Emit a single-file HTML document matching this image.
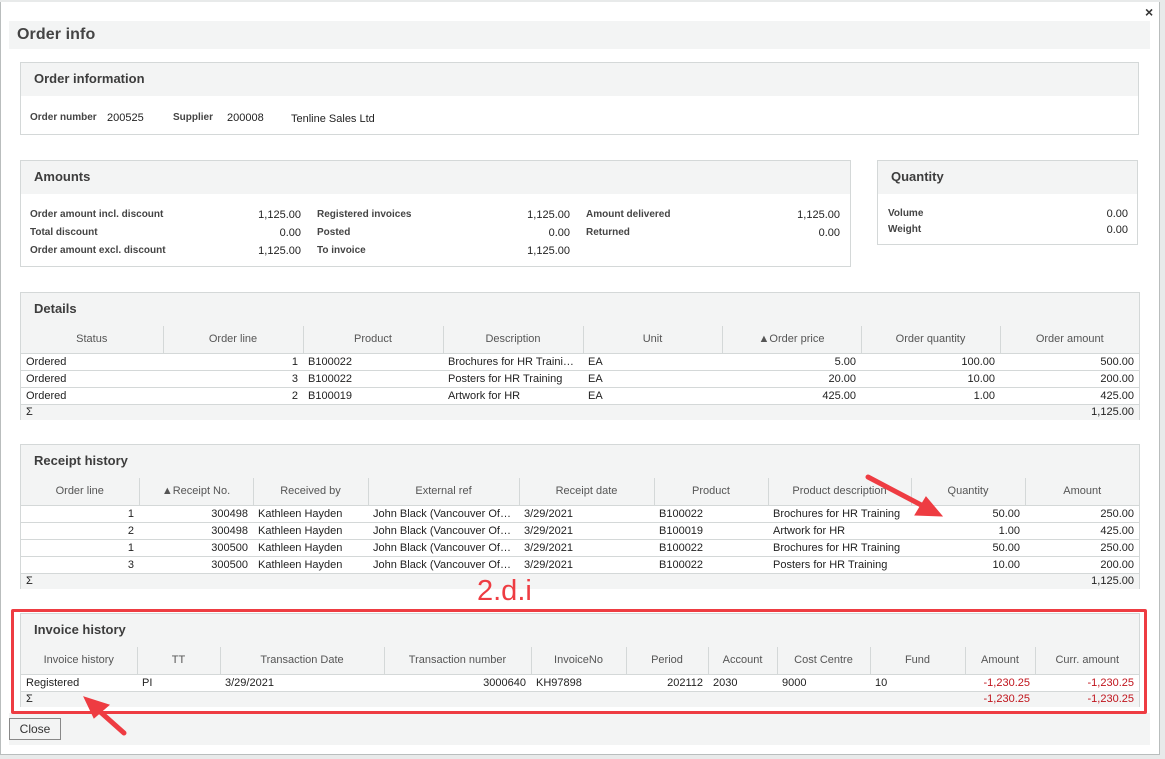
<!DOCTYPE html>
<html><head><meta charset="utf-8"><style>
*{margin:0;padding:0;box-sizing:border-box}
body{width:1165px;height:759px;background:#e8eaea;font-family:"Liberation Sans",sans-serif;color:#222;position:relative;overflow:hidden}
.dlg{position:absolute;left:0;top:2px;width:1160px;height:753px;background:#fff;border:1px solid #b9bdbd;border-top:none}
.abs{position:absolute}
.title{left:9px;top:21px;width:1141px;height:28px;background:#f3f4f4;font-size:16px;font-weight:bold;color:#444;padding:5px 8px;letter-spacing:0.1px}
.panel{position:absolute;border:1px solid #d4d8d8;background:#fff}
.ph{height:33px;background:#f3f4f4;font-size:13px;font-weight:bold;color:#3d3d3d;padding:8px 13px}
.lbl{font-size:10px;font-weight:bold;color:#444;position:absolute}
.val{font-size:11px;color:#222;position:absolute}
table{border-collapse:collapse;table-layout:fixed;width:100%;font-size:11px}
th{height:27px;background:#f3f4f4;font-weight:normal;color:#555;border:1px solid #d4d8d8;border-top:none;text-align:center;font-size:11px}
th:first-child{border-left:none}th:last-child{border-right:none}
td{height:17px;border-bottom:1px solid #d4d8d8;padding:0 5px;white-space:nowrap;overflow:hidden;text-overflow:ellipsis;color:#222}
tr.sum td{background:#f3f4f4;height:16px;border-bottom:none}
.r{text-align:right}.red{color:#c0141c}
</style></head><body>
<div class="dlg"></div>
<div class="abs" style="left:1145px;top:4px;font-size:14px;font-weight:bold;color:#333">×</div>
<div class="abs title">Order info</div>

<div class="panel" style="left:20px;top:62px;width:1119px;height:73px">
<div class="ph">Order information</div>
<span class="lbl" style="left:9px;top:49px">Order number</span><span class="val" style="left:86px;top:49px">200525</span>
<span class="lbl" style="left:152px;top:49px">Supplier</span><span class="val" style="left:206px;top:49px">200008</span>
<span class="val" style="left:270px;top:50px">Tenline Sales Ltd</span>
</div>

<div class="panel" style="left:20px;top:160px;width:831px;height:107px">
<div class="ph">Amounts</div>
<span class="lbl" style="left:9px;top:48px">Order amount incl. discount</span><span class="val r" style="left:200px;top:48px;width:80px">1,125.00</span>
<span class="lbl" style="left:9px;top:66px">Total discount</span><span class="val r" style="left:200px;top:66px;width:80px">0.00</span>
<span class="lbl" style="left:9px;top:84px">Order amount excl. discount</span><span class="val r" style="left:200px;top:84px;width:80px">1,125.00</span>
<span class="lbl" style="left:296px;top:48px">Registered invoices</span><span class="val r" style="left:469px;top:48px;width:80px">1,125.00</span>
<span class="lbl" style="left:296px;top:66px">Posted</span><span class="val r" style="left:469px;top:66px;width:80px">0.00</span>
<span class="lbl" style="left:296px;top:84px">To invoice</span><span class="val r" style="left:469px;top:84px;width:80px">1,125.00</span>
<span class="lbl" style="left:565px;top:48px">Amount delivered</span><span class="val r" style="left:739px;top:48px;width:80px">1,125.00</span>
<span class="lbl" style="left:565px;top:66px">Returned</span><span class="val r" style="left:739px;top:66px;width:80px">0.00</span>
</div>

<div class="panel" style="left:877px;top:160px;width:261px;height:85px">
<div class="ph">Quantity</div>
<span class="lbl" style="left:10px;top:47px">Volume</span><span class="val r" style="left:170px;top:47px;width:80px">0.00</span>
<span class="lbl" style="left:10px;top:63px">Weight</span><span class="val r" style="left:170px;top:63px;width:80px">0.00</span>
</div>

<div class="panel" style="left:20px;top:292px;width:1120px;height:128px">
<div class="ph">Details</div>
<table><colgroup><col style="width:142px"><col style="width:140px"><col style="width:140px"><col style="width:140px"><col style="width:139px"><col style="width:139px"><col style="width:139px"><col></colgroup>
<tr><th>Status</th><th>Order line</th><th>Product</th><th>Description</th><th>Unit</th><th>▲Order price</th><th>Order quantity</th><th>Order amount</th></tr>
<tr><td>Ordered</td><td class="r">1</td><td>B100022</td><td>Brochures for HR Traini…</td><td>EA</td><td class="r">5.00</td><td class="r">100.00</td><td class="r">500.00</td></tr>
<tr><td>Ordered</td><td class="r">3</td><td>B100022</td><td>Posters for HR Training</td><td>EA</td><td class="r">20.00</td><td class="r">10.00</td><td class="r">200.00</td></tr>
<tr><td>Ordered</td><td class="r">2</td><td>B100019</td><td>Artwork for HR</td><td>EA</td><td class="r">425.00</td><td class="r">1.00</td><td class="r">425.00</td></tr>
<tr class="sum"><td>Σ</td><td></td><td></td><td></td><td></td><td></td><td></td><td class="r">1,125.00</td></tr>
</table></div>

<div class="panel" style="left:20px;top:444px;width:1120px;height:145px">
<div class="ph">Receipt history</div>
<table><colgroup><col style="width:118px"><col style="width:114px"><col style="width:115px"><col style="width:151px"><col style="width:135px"><col style="width:114px"><col style="width:143px"><col style="width:114px"><col></colgroup>
<tr><th>Order line</th><th>▲Receipt No.</th><th>Received by</th><th>External ref</th><th>Receipt date</th><th>Product</th><th>Product description</th><th>Quantity</th><th>Amount</th></tr>
<tr><td class="r">1</td><td class="r">300498</td><td>Kathleen Hayden</td><td>John Black (Vancouver Of…</td><td>3/29/2021</td><td>B100022</td><td>Brochures for HR Training</td><td class="r">50.00</td><td class="r">250.00</td></tr>
<tr><td class="r">2</td><td class="r">300498</td><td>Kathleen Hayden</td><td>John Black (Vancouver Of…</td><td>3/29/2021</td><td>B100019</td><td>Artwork for HR</td><td class="r">1.00</td><td class="r">425.00</td></tr>
<tr><td class="r">1</td><td class="r">300500</td><td>Kathleen Hayden</td><td>John Black (Vancouver Of…</td><td>3/29/2021</td><td>B100022</td><td>Brochures for HR Training</td><td class="r">50.00</td><td class="r">250.00</td></tr>
<tr><td class="r">3</td><td class="r">300500</td><td>Kathleen Hayden</td><td>John Black (Vancouver Of…</td><td>3/29/2021</td><td>B100022</td><td>Posters for HR Training</td><td class="r">10.00</td><td class="r">200.00</td></tr>
<tr class="sum"><td>Σ</td><td></td><td></td><td></td><td></td><td></td><td></td><td></td><td class="r">1,125.00</td></tr>
</table></div>

<div class="panel" style="left:20px;top:613px;width:1120px;height:94px">
<div class="ph">Invoice history</div>
<table><colgroup><col style="width:116px"><col style="width:83px"><col style="width:164px"><col style="width:147px"><col style="width:95px"><col style="width:82px"><col style="width:69px"><col style="width:93px"><col style="width:95px"><col style="width:70px"><col></colgroup>
<tr><th>Invoice history</th><th>TT</th><th>Transaction Date</th><th>Transaction number</th><th>InvoiceNo</th><th>Period</th><th>Account</th><th>Cost Centre</th><th>Fund</th><th>Amount</th><th>Curr. amount</th></tr>
<tr><td>Registered</td><td>PI</td><td>3/29/2021</td><td class="r">3000640</td><td>KH97898</td><td class="r">202112</td><td>2030</td><td>9000</td><td>10</td><td class="r red">-1,230.25</td><td class="r red">-1,230.25</td></tr>
<tr class="sum"><td>Σ</td><td></td><td></td><td></td><td></td><td></td><td></td><td></td><td></td><td class="r red">-1,230.25</td><td class="r red">-1,230.25</td></tr>
</table></div>

<div class="abs" style="left:9px;top:713px;width:1141px;height:32px;background:#f3f4f4"></div>
<div class="abs" style="left:9px;top:718px;width:52px;height:22px;border:1px solid #888;background:#f3f4f4;font-size:12px;color:#333;text-align:center;line-height:20px">Close</div>

<div class="abs" style="left:11px;top:609px;width:1136px;height:105px;border:3px solid #ee3c42;border-radius:2px"></div>
<div class="abs" style="left:477px;top:575px;font-size:29px;color:#ee3c42">2.d.i</div>

<svg class="abs" style="left:0;top:0" width="1165" height="759">
<g fill="#ee3c42" stroke="#ee3c42">
<line x1="868" y1="477" x2="925" y2="507" stroke-width="5" stroke-linecap="round"/>
<polygon points="942,516 915,515 926,497" stroke-width="1"/>
<line x1="124" y1="733" x2="97" y2="709" stroke-width="5" stroke-linecap="round"/>
<polygon points="84,697 109,705 94,718" stroke-width="1"/>
</g></svg>
</body></html>
